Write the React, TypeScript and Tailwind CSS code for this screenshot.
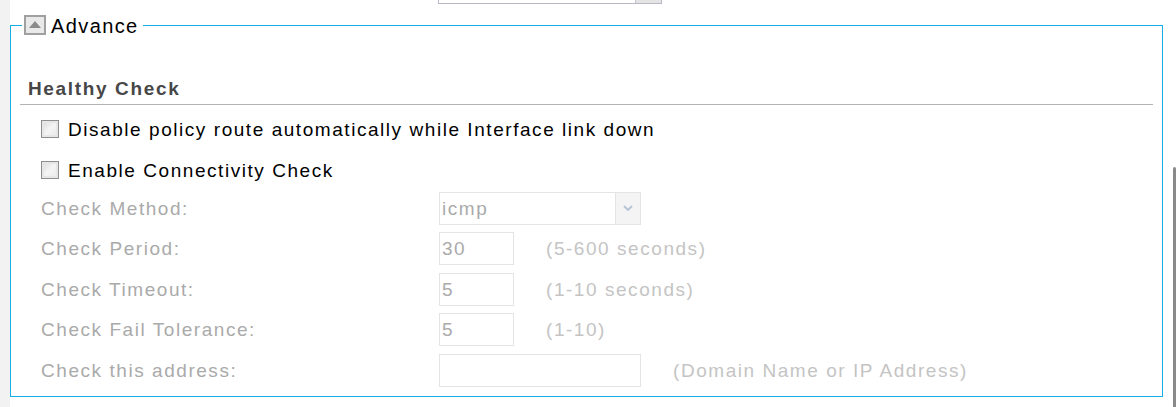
import React from 'react';

function Checkbox() {
  return (
    <span className="inline-block w-[18px] h-[18px] border border-[#8e8e8e] bg-gradient-to-br from-[#d9d9d9] via-[#f4f4f4] to-[#e8e8e8] shadow-[inset_0_0_0_2px_#e6e6e6] shrink-0" />
  );
}

function Row({ label, children }: { label: string; children: React.ReactNode }) {
  return (
    <div className="flex items-center h-[40.5px]">
      <span className="w-[439px] pl-[41px] text-[#aaaaaa]">{label}</span>
      {children}
    </div>
  );
}

export default function App() {
  return (
    <div
      className="w-[1176px] h-[407px] bg-white flex overflow-hidden text-[19px] tracking-[1.55px] leading-none"
      style={{ fontFamily: '"Liberation Sans", Arial, sans-serif' }}
    >
      {/* left strip */}
      <div className="w-[10px] shrink-0 bg-[#f2f2f2]" />

      <div className="relative flex-1">
        {/* select above (cut off) */}
        <div className="absolute left-[428px] top-[-20px] w-[224px] h-[24px] border border-[#b8b8c8] bg-white flex justify-end">
          <div className="w-[26px] h-full bg-[#e4e4e4] border-l border-[#c8c8d0]" />
        </div>

        <fieldset className="mt-[15px] w-[1153px] h-[382px] border border-[#17aee8] px-[9px] pb-0 pt-0 m-0">
          <legend className="ml-[2px] px-[2px] flex items-center gap-[5px]">
            <span className="w-[22px] h-[20px] border-2 border-[#a0a0a0] bg-[#e9e9e9] flex items-center justify-center">
              <svg width="12" height="8" viewBox="0 0 12 8">
                <polygon points="6,0 12,7 0,7" fill="#8a8a8a" />
              </svg>
            </span>
            <span className="relative top-[1px] text-[20px] tracking-[1.4px] text-black pr-[2px]">Advance</span>
          </legend>

          <div className="mt-[44px] border-b border-[#b4b4b4] pb-[6px] pl-[8px] text-[19px] tracking-[1.65px] font-bold text-[#474747]">
            Healthy Check
          </div>

          <div className="mt-[15px] flex items-center gap-[9px] pl-[21px] h-[18px]">
            <Checkbox />
            <span className="text-black">Disable policy route automatically while Interface link down</span>
          </div>
          <div className="mt-[23px] flex items-center gap-[9px] pl-[21px] h-[18px]">
            <Checkbox />
            <span className="text-black">Enable Connectivity Check</span>
          </div>

          <div className="mt-[9px] -ml-[20px]">
            <Row label="Check Method:">
              <div className="w-[202px] h-[33px] border border-[#e4e4e4] flex items-center">
                <span className="flex-1 pl-[2px] text-[#aaaaaa]">icmp</span>
                <span className="w-[25px] h-full bg-[#f4f4f4] border-l border-[#e4e4e4] flex items-center justify-center">
                  <svg width="10" height="6" viewBox="0 0 10 6">
                    <path d="M1 1 L5 5 L9 1" stroke="#b8c4d8" strokeWidth="2" fill="none" />
                  </svg>
                </span>
              </div>
            </Row>
            <Row label="Check Period:">
              <div className="w-[75px] h-[33px] border border-[#e4e4e4] flex items-center pl-[2px] text-[#aaaaaa]">30</div>
              <span className="ml-[32px] text-[#c4c4c4]">(5-600 seconds)</span>
            </Row>
            <Row label="Check Timeout:">
              <div className="w-[75px] h-[33px] border border-[#e4e4e4] flex items-center pl-[2px] text-[#aaaaaa]">5</div>
              <span className="ml-[32px] text-[#c4c4c4]">(1-10 seconds)</span>
            </Row>
            <Row label="Check Fail Tolerance:">
              <div className="w-[75px] h-[33px] border border-[#e4e4e4] flex items-center pl-[2px] text-[#aaaaaa]">5</div>
              <span className="ml-[32px] text-[#c4c4c4]">(1-10)</span>
            </Row>
            <Row label="Check this address:">
              <div className="w-[202px] h-[33px] border border-[#e4e4e4]" />
              <span className="ml-[32px] text-[#c4c4c4]">(Domain Name or IP Address)</span>
            </Row>
          </div>
        </fieldset>
      </div>

      {/* scrollbar */}
      <div className="w-[13px] shrink-0 relative">
        <div className="absolute right-0 top-[167px] bottom-0 w-[3px] bg-[#8a8a8a] rounded-t" />
      </div>
    </div>
  );
}
